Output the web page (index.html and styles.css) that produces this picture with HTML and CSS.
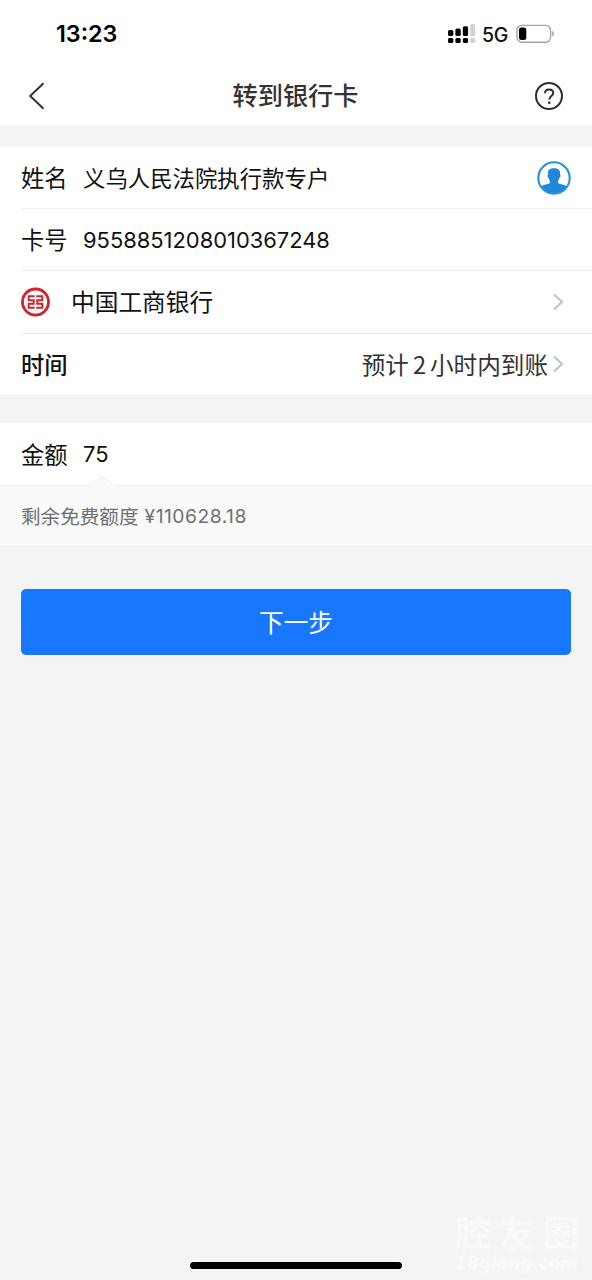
FILE: index.html
```html
<!DOCTYPE html>
<html lang="zh-CN">
<head>
<meta charset="utf-8">
<title>转到银行卡</title>
<link rel="stylesheet" href="styles.css">
</head>
<body>
<header class="top">
  <div class="status">
    <span class="time">13:23</span>
    <div class="indicators">
      <svg class="signal" width="28" height="20" viewBox="0 0 28 20">
        <g fill="#000"><rect x="0" y="6" width="5.3" height="6" rx="1.5"/><rect x="7.4" y="4.6" width="5.3" height="7.4" rx="1.5"/><rect x="14.8" y="2.3" width="5.3" height="9.7" rx="1.5"/>
        <rect x="0" y="14" width="5.3" height="5" rx="1.5"/><rect x="7.4" y="14" width="5.3" height="5" rx="1.5"/><rect x="14.8" y="14" width="5.3" height="5" rx="1.5"/></g>
        <g fill="#d2d2d2"><rect x="22.2" y="0" width="5" height="12" rx="1.5"/><rect x="22.2" y="14" width="5" height="5" rx="1.5"/></g>
      </svg>
      <span class="network">5G</span>
      <svg class="battery" width="39" height="20" viewBox="0 0 39 20"><rect x="1" y="1.4" width="33.6" height="16.8" rx="5" fill="#fff" stroke="#a3a3a3" stroke-width="1.4"/><rect x="3" y="3.5" width="7.3" height="12.6" rx="2.5" fill="#000"/><path d="M36.2 7v5.6c2.2-.8 2.2-4.800 0-5.600z" fill="#999"/></svg>
    </div>
  </div>
  <nav class="nav">
    <svg class="back" width="18" height="30" viewBox="0 0 18 30"><path d="M15.500 2.200 2.200 15 15.500 27.800" fill="none" stroke="#333" stroke-width="2"/></svg>
    <h1 class="title">转到银行卡</h1>
    <svg class="help" width="30" height="30" viewBox="0 0 30 30"><circle cx="15" cy="15" r="13" fill="none" stroke="#2e2e31" stroke-width="2"/><path d="M11 12.300C11 9.800 12.600 8.400 15.100 8.400s4.200 1.400 4.200 3.600c0 3-4 3.200-4 6.400" fill="none" stroke="#2e2e31" stroke-width="2"/><circle cx="15.300" cy="21.800" r="1.350" fill="#2e2e31"/></svg>
  </nav>
</header>
<main>
  <section class="card">
    <div class="row"><span class="label">姓名</span><span class="name">义乌人民法院执行款专户</span>
      <svg class="contact" width="34" height="34" viewBox="0 0 34 34"><clipPath id="disc"><circle cx="17" cy="17" r="16"/></clipPath><g clip-path="url(#disc)" fill="#1f88dc"><path d="M11 13.500C10.500 9 12.800 7.300 17 7.300s6.500 1.700 6 6.200c1 .8.300 3.200-.8 3.700-.3 1.700-.9 2.500-1.200 3v1.600c2 1.900 8 1.800 11 5V34H2v-7.200c3-3.200 9-3.100 11-5v-1.600c-.3-.5-.9-1.300-1.200-3-1.100-.5-1.800-2.900-.8-3.700z"/></g><circle cx="17" cy="17" r="15.700" fill="none" stroke="#2790df" stroke-width="2.100"/></svg>
    </div>
    <div class="row"><span class="label">卡号</span><span class="number">9558851208010367248</span></div>
    <div class="row tall"><svg class="bank-logo" width="30" height="30" viewBox="0 0 30 30"><circle cx="14.500" cy="15" r="13" fill="#fff" stroke="#cd2430" stroke-width="2.800"/><g fill="none" stroke="#cd2430" stroke-width="2"><path d="M13.700 9.300H7.700v4h5v3.500h-5v4h6"/><path d="M15.300 9.300h6v4h-5v3.500h5v4h-6"/></g></svg><span class="bank">中国工商银行</span><svg class="arrow" width="13" height="18" viewBox="0 0 13 18"><path d="m2 1.500 8 7.500-8 7.500" fill="none" stroke="#c4c4c6" stroke-width="2.300"/></svg></div>
    <div class="row"><span class="label strong">时间</span><span class="arrival">预计<span class="hours">2</span>小时内到账</span><svg class="arrow near" width="13" height="18" viewBox="0 0 13 18"><path d="m2 1.500 8 7.500-8 7.500" fill="none" stroke="#c4c4c6" stroke-width="2.300"/></svg></div>
  </section>
  <section class="card amount-card">
    <div class="row"><span class="label low">金额</span><span class="number amount">75</span></div>
    <div class="quota"><svg class="notch" width="28" height="10" viewBox="0 0 28 10"><path d="M0 10 14 .7 28 10" fill="#fafafb" stroke="#eeeeef"/></svg><span class="quota-label">剩余免费额度</span><span class="quota-value">¥110628.18</span></div>
  </section>
  <button class="next">下一步</button>
</main>
<div class="home-bar"></div>
<div class="watermark"><div class="wm-name">腔友圈</div><div class="wm-site">18qiang.com</div></div>
</body>
</html>
```
FILE: styles.css
```css
* { box-sizing: border-box; }
body { margin: 0; height: 1280px; overflow: hidden; position: relative; background: #f4f4f4; color: #111; font-family: "Inter", "Noto Sans CJK SC", sans-serif; }
svg { display: block; flex: none; }
.top { height: 125px; background: #fff; }
.status { height: 66px; padding: 0 37px 0 56px; display: flex; align-items: center; justify-content: space-between; }
.time { font-size: 23.300px; font-weight: 600; line-height: 28px; color: #000; padding-top: 2px; }
.indicators { display: flex; align-items: center; padding-top: 2px; }
.network { font-size: 19.500px; font-weight: 500; line-height: 24px; margin-left: 6px; width: 34px; letter-spacing: -.3px; color: #111; padding-top: 1px; }
.nav { height: 59px; padding: 0 28px 0 28px; display: flex; align-items: center; justify-content: space-between; }
.title { margin: 0 0 4px; padding-left: 11px; font: 500 25.200px/36px "Noto Sans CJK SC", sans-serif; color: #333; }
.card { margin-top: 22px; background: #fff; }
.row { height: 62px; margin-left: 21px; padding-right: 21px; display: flex; align-items: center; border-bottom: 1px solid #ededee; white-space: nowrap; }
.tall { height: 63px; }
.card:first-child .row:last-child { height: 60px; border: 0; }
.label { font: 400 23.300px/34px "Noto Sans CJK SC", sans-serif; width: 62px; flex: none; padding-bottom: 2px; }
.strong { font-weight: 500; }
.strong, .low { padding-bottom: 0; }
.name { font: 400 22.400px/34px "Noto Sans CJK SC", sans-serif; padding-bottom: 2px; }
.number { font-size: 21.900px; line-height: 30px; }
.contact, .arrow { margin-left: auto; }
.arrow { margin-right: 6px; }
.bank { margin-left: 20px; padding-bottom: 2px; font: 400 23.700px/34px "Noto Sans CJK SC", sans-serif; }
.arrival { margin-left: auto; font: 400 23.600px/34px "Noto Sans CJK SC", sans-serif; color: #333; }
.hours { margin: 0 4px; }
.arrow.near { margin-left: 4px; }
.amount-card { margin-top: 29px; }
.amount-card .row { border: 0; }
.quota { position: relative; height: 62px; padding-left: 21px; display: flex; align-items: center; background: #fafafb; border-top: 1px solid #eeeeef; border-bottom: 1px solid #eeeeef; color: #707072; }
.notch { position: absolute; left: 88px; top: -10px; }
.quota-label { font: 400 19.600px/30px "Noto Sans CJK SC", sans-serif; }
.quota-value { font-size: 19.300px; line-height: 28px; letter-spacing: .5px; margin-left: 6px; }
.next { display: block; width: 550px; height: 66px; margin: 42px 21px 0; padding: 0 0 2px; border: 0; border-radius: 5px; background: #1777ff; color: #fff; font: 400 24.700px/64px "Noto Sans CJK SC", sans-serif; }
.home-bar { position: absolute; left: 190px; top: 1262px; width: 212px; height: 7px; border-radius: 4px; background: #000; }
.watermark { position: absolute; left: 455px; top: 1208px; width: 124px; color: #fafafa; white-space: nowrap; }
.wm-name { font: 700 36px/46px "Noto Sans CJK SC", sans-serif; letter-spacing: 8px; }
.wm-site { font: italic 700 17px/18px "DejaVu Sans", sans-serif; }
```
